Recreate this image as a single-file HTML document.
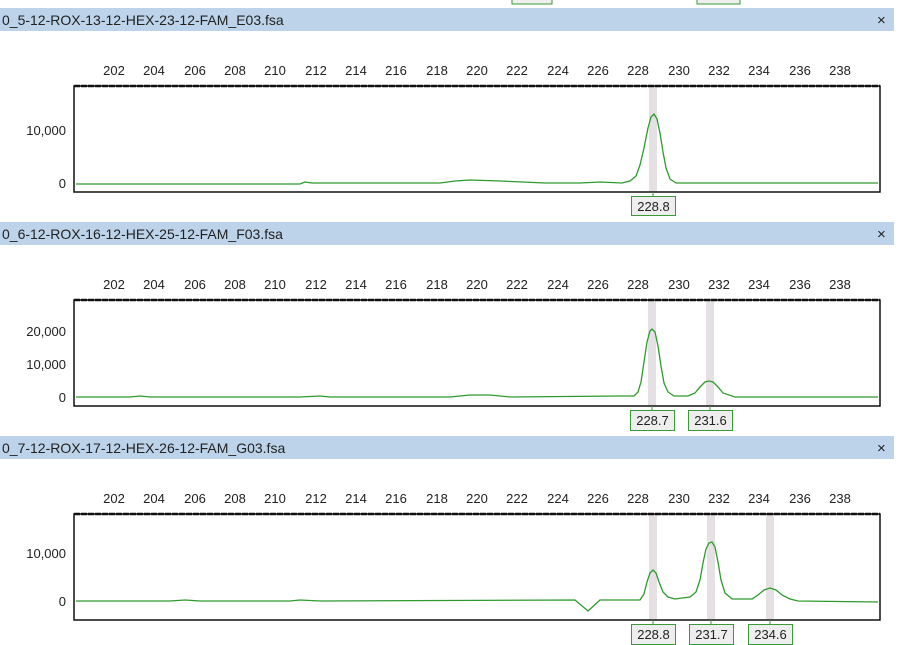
<!DOCTYPE html>
<html><head><style>
body{margin:0;background:#fff;width:900px;height:645px;overflow:hidden}
svg{display:block}
text{font-family:"Liberation Sans",Arial,sans-serif;font-size:13px;fill:#222}
</style></head><body>
<svg width="900" height="645" xmlns="http://www.w3.org/2000/svg">
<defs>
<g id="ax">
<text y="0" x="114" text-anchor="middle">202</text><text x="154" text-anchor="middle">204</text><text x="195" text-anchor="middle">206</text><text x="235" text-anchor="middle">208</text><text x="275" text-anchor="middle">210</text><text x="316" text-anchor="middle">212</text><text x="356" text-anchor="middle">214</text><text x="396" text-anchor="middle">216</text><text x="437" text-anchor="middle">218</text><text x="477" text-anchor="middle">220</text><text x="517" text-anchor="middle">222</text><text x="558" text-anchor="middle">224</text><text x="598" text-anchor="middle">226</text><text x="638" text-anchor="middle">228</text><text x="679" text-anchor="middle">230</text><text x="719" text-anchor="middle">232</text><text x="759" text-anchor="middle">234</text><text x="800" text-anchor="middle">236</text><text x="840" text-anchor="middle">238</text>
</g>
</defs>
<rect x="512" y="-4" width="40" height="8" fill="#eee" stroke="#3a9a3a"/>
<rect x="697" y="-4" width="43" height="8" fill="#eee" stroke="#3a9a3a"/>

<rect x="0" y="8" width="894" height="23" fill="#bcd3ea"/>
<text x="2" y="25" style="font-size:14px">0_5-12-ROX-13-12-HEX-23-12-FAM_E03.fsa</text>
<text x="877" y="25" style="font-size:15px">×</text>
<g transform="translate(0,75)"><use href="#ax"/></g>
<rect x="649" y="87" width="8" height="105" fill="#e5e0e4"/>
<rect x="74" y="86" width="806" height="106" fill="none" stroke="#111" stroke-width="1.5"/>
<line x1="74" y1="86" x2="880" y2="86" stroke="#111" stroke-width="2.5" stroke-dasharray="6 1"/>
<text x="66" y="135" text-anchor="end">10,000</text><text x="66" y="188" text-anchor="end">0</text>
<polyline fill="none" stroke="#2e9a2e" stroke-width="1.3" points="76,184 300,184 305,182 312,183 440,183 455,181 470,180 500,181 545,183 580,183 600,182 622,183 630,181 636,176 640,165 644,148 648,128 651,117 654,114 657,119 660,133 663,152 666,168 670,179 676,183 878,183"/>
<line x1="653" y1="192" x2="653" y2="196" stroke="#3a9a3a"/>
<rect x="631.5" y="196.5" width="44" height="19" fill="#eee" stroke="#3a9a3a"/>
<text x="653.5" y="211" text-anchor="middle">228.8</text>

<rect x="0" y="222" width="894" height="23" fill="#bcd3ea"/>
<text x="2" y="239" style="font-size:14px">0_6-12-ROX-16-12-HEX-25-12-FAM_F03.fsa</text>
<text x="877" y="239" style="font-size:15px">×</text>
<g transform="translate(0,289)"><use href="#ax"/></g>
<rect x="648" y="301" width="8" height="105" fill="#e5e0e4"/>
<rect x="706" y="301" width="8" height="105" fill="#e5e0e4"/>
<rect x="74" y="300" width="806" height="106" fill="none" stroke="#111" stroke-width="1.5"/>
<line x1="74" y1="300" x2="880" y2="300" stroke="#111" stroke-width="2.5" stroke-dasharray="6 1"/>
<text x="66" y="336" text-anchor="end">20,000</text><text x="66" y="369" text-anchor="end">10,000</text><text x="66" y="402" text-anchor="end">0</text>
<polyline fill="none" stroke="#2e9a2e" stroke-width="1.3" points="76,397 130,397 140,396 150,397 300,397 320,396 330,397 450,397 470,395 490,395 510,397 620,396 634,396 638,392 641,382 644,362 647,342 650,331 652,329 655,332 658,346 661,366 664,383 668,392 674,396 688,396 695,393 700,387 705,382 709,381 713,382 718,387 723,393 735,397 878,397"/>
<line x1="652" y1="406" x2="652" y2="410" stroke="#3a9a3a"/><line x1="710" y1="406" x2="710" y2="410" stroke="#3a9a3a"/>
<rect x="630.5" y="410.5" width="44" height="20" fill="#eee" stroke="#3a9a3a"/>
<text x="652.5" y="425" text-anchor="middle">228.7</text>
<rect x="688.5" y="410.5" width="44" height="20" fill="#eee" stroke="#3a9a3a"/>
<text x="710.5" y="425" text-anchor="middle">231.6</text>

<rect x="0" y="436" width="894" height="23" fill="#bcd3ea"/>
<text x="2" y="453" style="font-size:14px">0_7-12-ROX-17-12-HEX-26-12-FAM_G03.fsa</text>
<text x="877" y="453" style="font-size:15px">×</text>
<g transform="translate(0,503)"><use href="#ax"/></g>
<rect x="649" y="515" width="8" height="105" fill="#e5e0e4"/>
<rect x="707" y="515" width="8" height="105" fill="#e5e0e4"/>
<rect x="766" y="515" width="8" height="105" fill="#e5e0e4"/>
<rect x="74" y="514" width="806" height="106" fill="none" stroke="#111" stroke-width="1.5"/>
<line x1="74" y1="514" x2="880" y2="514" stroke="#111" stroke-width="2.5" stroke-dasharray="6 1"/>
<text x="66" y="558" text-anchor="end">10,000</text><text x="66" y="606" text-anchor="end">0</text>
<polyline fill="none" stroke="#2e9a2e" stroke-width="1.3" points="76,601 170,601 185,600 200,601 290,601 300,600 320,601 575,600 588,611 600,600 640,600 644,594 647,582 650,573 653,570 656,573 659,582 663,592 668,597 675,599 690,597 696,592 700,580 703,563 706,549 709,543 712,542 715,547 718,562 721,580 725,593 732,599 752,599 758,595 764,590 770,588 776,590 782,595 790,599 798,601 878,602"/>
<line x1="653" y1="620" x2="653" y2="624" stroke="#3a9a3a"/><line x1="711" y1="620" x2="711" y2="624" stroke="#3a9a3a"/><line x1="770" y1="620" x2="770" y2="624" stroke="#3a9a3a"/>
<rect x="631.5" y="624.5" width="44" height="20" fill="#eee" stroke="#3a9a3a"/>
<text x="653.5" y="639" text-anchor="middle">228.8</text>
<rect x="689.5" y="624.5" width="44" height="20" fill="#eee" stroke="#3a9a3a"/>
<text x="711.5" y="639" text-anchor="middle">231.7</text>
<rect x="748.5" y="624.5" width="44" height="20" fill="#eee" stroke="#3a9a3a"/>
<text x="770.5" y="639" text-anchor="middle">234.6</text>
</svg>
</body></html>
